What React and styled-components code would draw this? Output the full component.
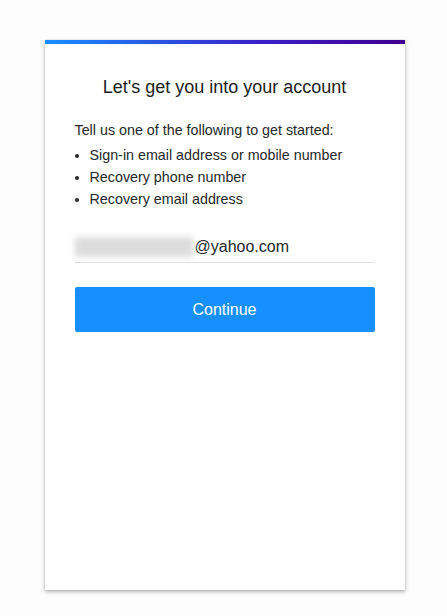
import styled, { createGlobalStyle } from "styled-components";

const GlobalStyle = createGlobalStyle`
  body {
    margin: 0;
    background: #fdfdfd;
    font-family: "Liberation Sans", Arial, sans-serif;
  }
`;

const Page = styled.div`
  display: flex;
  justify-content: center;
  padding: 40px 0 0 2px;
  height: 616px;
  box-sizing: border-box;
`;

const Card = styled.div`
  width: 360px;
  height: 550px;
  background: #fff;
  border-top: 4px solid transparent;
  border-image: linear-gradient(90deg, #188fff, #3a1fc8 60%, #400090) 1;
  border-bottom: 0;
  border-left: 0;
  border-right: 0;
  box-shadow: 0 2px 4px rgba(0, 0, 0, 0.28), 0 0 2px rgba(0, 0, 0, 0.12);
  padding: 33px 30px 0;
  box-sizing: border-box;
`;

const Title = styled.h1`
  margin: 0;
  font-size: 18px;
  font-weight: 400;
  color: #1d1d1d;
  text-align: center;
  line-height: 20px;
`;

const Intro = styled.p`
  margin: 23px 0 0;
  font-size: 14.3px;
  color: #26282a;
  line-height: 20px;
`;

const List = styled.ul`
  margin: 4px 0 0;
  padding-left: 15px;
  font-size: 14.3px;
  color: #26282a;
  line-height: 22px;
`;

const Field = styled.div`
  margin-top: 20px;
  display: flex;
  align-items: center;
  height: 33px;
  padding-top: 2px;
  box-sizing: border-box;
  border-bottom: 1px solid #dedede;
  font-size: 16px;
  color: #26282a;
`;

const Blur = styled.span`
  display: inline-block;
  width: 118px;
  height: 20px;
  margin-right: 2px;
  background: #dcdcdc;
  filter: blur(3px);
`;

const Button = styled.button`
  display: block;
  width: 100%;
  height: 45px;
  margin-top: 24px;
  border: none;
  border-radius: 2px;
  background: #188fff;
  color: #fff;
  font-family: "Liberation Sans", Arial, sans-serif;
  font-size: 16px;
`;

export default function App() {
  return (
    <>
      <GlobalStyle />
      <Page>
        <Card>
          <Title>Let's get you into your account</Title>
          <Intro>Tell us one of the following to get started:</Intro>
          <List>
            <li>Sign-in email address or mobile number</li>
            <li>Recovery phone number</li>
            <li>Recovery email address</li>
          </List>
          <Field>
            <Blur />
            @yahoo.com
          </Field>
          <Button>Continue</Button>
        </Card>
      </Page>
    </>
  );
}
